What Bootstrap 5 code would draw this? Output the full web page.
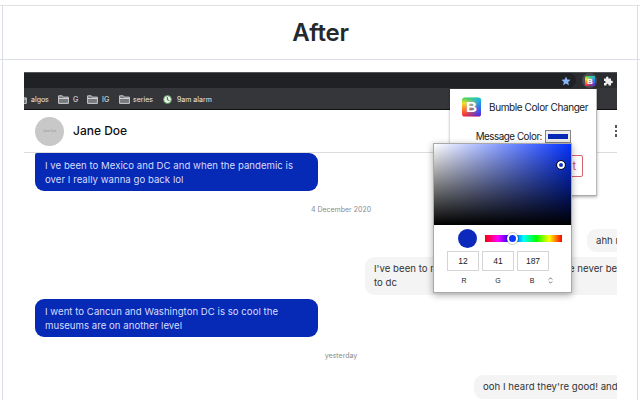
<!DOCTYPE html>
<html lang="en">
<head>
<meta charset="utf-8">
<title>Bumble Color Changer</title>
<link href="https://cdn.jsdelivr.net/npm/bootstrap@5.3.0/dist/css/bootstrap.min.css" rel="stylesheet">
<style>
body{width:640px;height:400px;overflow:hidden;background:#fff;font-family:Inter,"Liberation Sans",sans-serif;color:#24292e}
.page{height:400px;padding-top:5px}
.title-row{height:55px;border-top:1px solid #dfe2e5;border-bottom:1px solid #dcdfe6}
.frame{margin:0 2px;border-left:1px solid #dadde3;border-right:1px solid #dadde3}
.title-row h1{font-size:24px;line-height:53px;font-weight:600;letter-spacing:-.2px;margin:0;padding-left:1px}
.content{height:340px;padding:12px 20px 0 21px}
.shot{height:328px;background:#fff;overflow:hidden}
.toolbar{height:16px;background:#2b2c30;border-top:1px solid #55565a}
.address{width:552px;height:15px;background:#202124;border-radius:0 7px 8px 0;padding-right:5px}
.ext{width:15px;height:15px;border-radius:50%;background:#4b4c50;margin-left:6px}
.bookmarks{height:22px;background:#35363a;border-bottom:1px solid #111;color:#e8eaed;font-size:7px;line-height:20px;padding-top:2px;white-space:nowrap}
.chat-head{height:43px;border-bottom:1px solid #dcdcdc;padding-left:11px}
.avatar{width:29px;height:29px;border-radius:50%;background:#c8c8c8;font-size:3px;color:#999}
.person{font-size:12px;font-weight:500;color:#111;margin-left:9px;letter-spacing:0}
.bubble{font-size:9.6px;line-height:14px;padding:5px 10px;white-space:nowrap;letter-spacing:.03px}
.mine{width:283px;height:38px;background:#0629b6;color:#d7ddff;border-radius:9px;margin-left:11px;padding-top:6px}
.first{border-top-left-radius:2px}
.theirs{background:#f4f4f4;color:#333;border-radius:9px 0 0 9px;overflow:hidden}
.stamp{font-size:7px;line-height:10px;color:#8b8b8b;padding-left:41px}
.popup{left:450px;top:89px;width:147px;height:107px;background:#fff;border-right:1px solid #bbb;border-bottom:1px solid #aaa;box-shadow:0 1px 3px #0005;color:#17191c}
.brand{font-size:10px;margin-left:8px;white-space:nowrap;letter-spacing:-.4px}
.setting{padding-right:25px;margin-top:13px;font-size:9.8px;line-height:13px;white-space:nowrap;letter-spacing:-.45px}
.picker{left:433px;top:143px;width:139px;height:150px;background:#fff;border:1px solid #a9a9a9;box-shadow:0 2px 7px #0005;z-index:3;color:#222;font-family:"Liberation Sans",Arial,sans-serif}
.spectrum{height:81px;background:linear-gradient(to top,#000,transparent),linear-gradient(to right,#fff,#0432ff)}
.ring{width:8px;height:8px;border:2px solid #fff;outline:1px solid #111;border-radius:50%;left:123px;top:17px}
.color-dot{width:19px;height:19px;border-radius:50%;background:#0c29bb}
.hue{width:77px;height:7px;background:linear-gradient(to right,#f00,#f0f,#00f,#0ff,#0f0,#ff0,#f00)}
.thumb{width:11px;height:11px;border:2px solid #fff;outline:1px solid #0003;background:#0a37ff;border-radius:50%;left:22px;top:-2px}
.value{width:32px;height:20px;border:1px solid #d5d5d5;font-size:8.5px;line-height:18px;text-align:center}
.channel{width:32px;font-size:7px;line-height:9px;text-align:center}
.swatch{width:26px;height:13px;border:1px solid #858585;background:#eee;padding:3px 2px}
.reset{left:72px;top:66px;width:61px;height:22px;border:1px solid #d46472;border-radius:2px;color:#cf4858;font-size:11px;line-height:20px;padding-right:6px}
</style>
<script src="https://cdn.jsdelivr.net/npm/bootstrap@5.3.0/dist/js/bootstrap.bundle.min.js"></script>
</head>
<body>
<svg width="0" height="0" class="position-absolute"><defs>
<symbol id="folder" viewBox="0 0 11 9"><path d="M.6 8.4V.8h3.700l1.100 1.300h5v6.300zM.6 3.500h9.800" fill="#77797c" stroke="#d7d8da" stroke-width=".9"/></symbol>
</defs></svg>
<main class="page">
  <header class="title-row"><div class="frame h-100 text-center"><h1>After</h1></div></header>
  <div class="frame content">
    <section class="shot">
      <div class="toolbar d-flex align-items-center">
        <div class="address d-flex align-items-center justify-content-end">
          <svg width="10" height="10" viewBox="0 0 20 20"><path d="M10 1l2.700 6 6.500.6-4.900 4.300 1.500 6.400-5.800-3.400-5.700 3.400 1.400-6.400L.9 7.600 7.400 7z" fill="#8ab4f8"/></svg>
        </div>
        <div class="ext d-flex align-items-center justify-content-center">
          <svg width="10" height="10" viewBox="0 0 20 20"><use href="#logo"/></svg>
        </div>
        <svg style="margin-left:6px" width="10" height="10" viewBox="0 0 20 20"><path d="M2 5h4.400C5.600 2.700 6.500.8 8.500.8s3 1.900 2.100 4.200H16v4.600c2.200-.6 3.700.3 3.700 2.200s-1.500 2.900-3.700 2.300V19h-5c.4-2.200-.5-3.300-2-3.300S6.600 16.800 7 19H2v-5c2 .4 3.200-.5 3.200-2.100S4 9.600 2 10z" fill="#eee"/></svg>
      </div>
      <div class="bookmarks d-flex align-items-center overflow-hidden">
        <svg width="3" height="8" viewBox="8 0 3 9"><path d="M8 8.400h2.400V2.100H8M8 3.500h2.400" fill="#77797c" stroke="#d7d8da"/></svg><span style="margin-left:4px;width:27px">algos</span>
        <svg width="11" height="9"><use href="#folder"/></svg><span style="margin-left:4px;width:14px">G</span>
        <svg width="11" height="9"><use href="#folder"/></svg><span style="margin-left:4px;width:17px">IG</span>
        <svg width="11" height="9"><use href="#folder"/></svg><span style="margin-left:3px;width:30px">series</span>
        <svg width="9" height="9" viewBox="0 0 9 9"><circle cx="4.500" cy="4.500" r="3.900" fill="#eef5ec" stroke="#549957" stroke-width=".9"/><path d="M4.300 2v2.800l2 .7" stroke="#286637" fill="none"/></svg><span style="margin-left:5px">9am alarm</span>
      </div>
      <div class="chat-head d-flex align-items-center">
        <div class="avatar d-flex align-items-center justify-content-center">Jane Doe</div><div class="person">Jane Doe</div>
        <svg class="ms-auto" width="2" height="12"><path d="M0 0h2v3H0zM0 5h2v2H0zM0 9h2v3H0z" fill="#555"/></svg>
      </div>
      <div class="bubble mine first">I ve been to Mexico and DC and when the pandemic is<br>over I really wanna go back lol</div>
      <div class="stamp text-center" style="margin-top:14px">4 December 2020</div>
      <div class="bubble theirs ms-auto" style="width:30px;height:23px;margin-top:14px;padding-left:9px">ahh nice</div>
      <div class="bubble theirs ms-auto d-flex" style="width:252px;height:38px;margin-top:5px;padding-left:9px"><div class="flex-shrink-0" style="width:195px">I've been to mexico<br>to dc</div><div>e never been</div></div>
      <div class="bubble mine" style="margin-top:4px">I went to Cancun and Washington DC is so cool the<br>museums are on another level</div>
      <div class="stamp text-center" style="margin-top:14px">yesterday</div>
      <div class="bubble theirs ms-auto" style="width:143px;height:24px;margin-top:14px;padding-left:9px">ooh I heard they're good! and</div>
    </section>
  </div>
</main>
<aside class="popup position-absolute">
  <div class="d-flex align-items-center" style="padding:8px 0 0 12px">
    <svg width="19" height="20" viewBox="0 0 20 20"><defs><linearGradient id="rainbow" x1="0" y1="1" x2="1" y2="0"><stop stop-color="#f43535"/><stop offset="1" stop-color="#18a8e0"/></linearGradient><linearGradient id="spectral" x1="0" y1="0" x2="0" y2="1"><stop stop-color="#30d25a"/><stop offset=".3" stop-color="#f5e02a"/><stop offset=".6" stop-color="#ff8420"/><stop offset="1" stop-color="#ee2040"/></linearGradient><linearGradient id="cool" x1="0" y1="0" x2="0" y2="1"><stop stop-color="#18c8e0"/><stop offset=".5" stop-color="#2878f0"/><stop offset="1" stop-color="#5524e8"/></linearGradient><linearGradient id="fade"><stop offset=".15" stop-color="#000"/><stop offset=".9" stop-color="#fff"/></linearGradient><mask id="blend"><rect width="20" height="20" fill="url(#fade)"/></mask></defs>
      <g id="logo"><rect width="20" height="20" rx="3" fill="url(#spectral)"/><rect width="20" height="20" rx="3" fill="url(#cool)" mask="url(#blend)"/><text x="10" y="15.700" text-anchor="middle" font-family="Liberation Sans" font-weight="700" font-size="16" fill="#fff">B</text></g></svg>
    <span class="brand">Bumble Color Changer</span>
  </div>
  <div class="setting d-flex justify-content-end align-items-center"><span style="margin-right:3px">Message Color:</span><div class="swatch"><div class="h-100" style="background:#0629b6"></div></div></div>
  <div class="reset position-absolute text-end">Reset</div>
</aside>
<aside class="picker position-absolute">
  <div class="spectrum position-relative"><div class="ring position-absolute"></div></div>
  <div class="d-flex align-items-center" style="padding:4px 0 0 24px;gap:8px"><div class="color-dot"></div><div class="hue position-relative"><div class="thumb position-absolute"></div></div></div>
  <div class="d-flex" style="padding:3px 0 0 13px;gap:3px"><div class="value">12</div><div class="value">41</div><div class="value">187</div></div>
  <div class="d-flex align-items-center" style="padding:5px 0 0 14px;gap:2px"><div class="channel">R</div><div class="channel">G</div><div class="channel">B</div><svg width="5" height="7" viewBox="0 0 5 7" style="margin-left:-2px"><path d="M.8 2.500L2.500.8l1.700 1.700M.8 4.500l1.700 1.700 1.700-1.700" fill="none" stroke="#555" stroke-width=".8"/></svg></div>
</aside>
</body>
</html>
